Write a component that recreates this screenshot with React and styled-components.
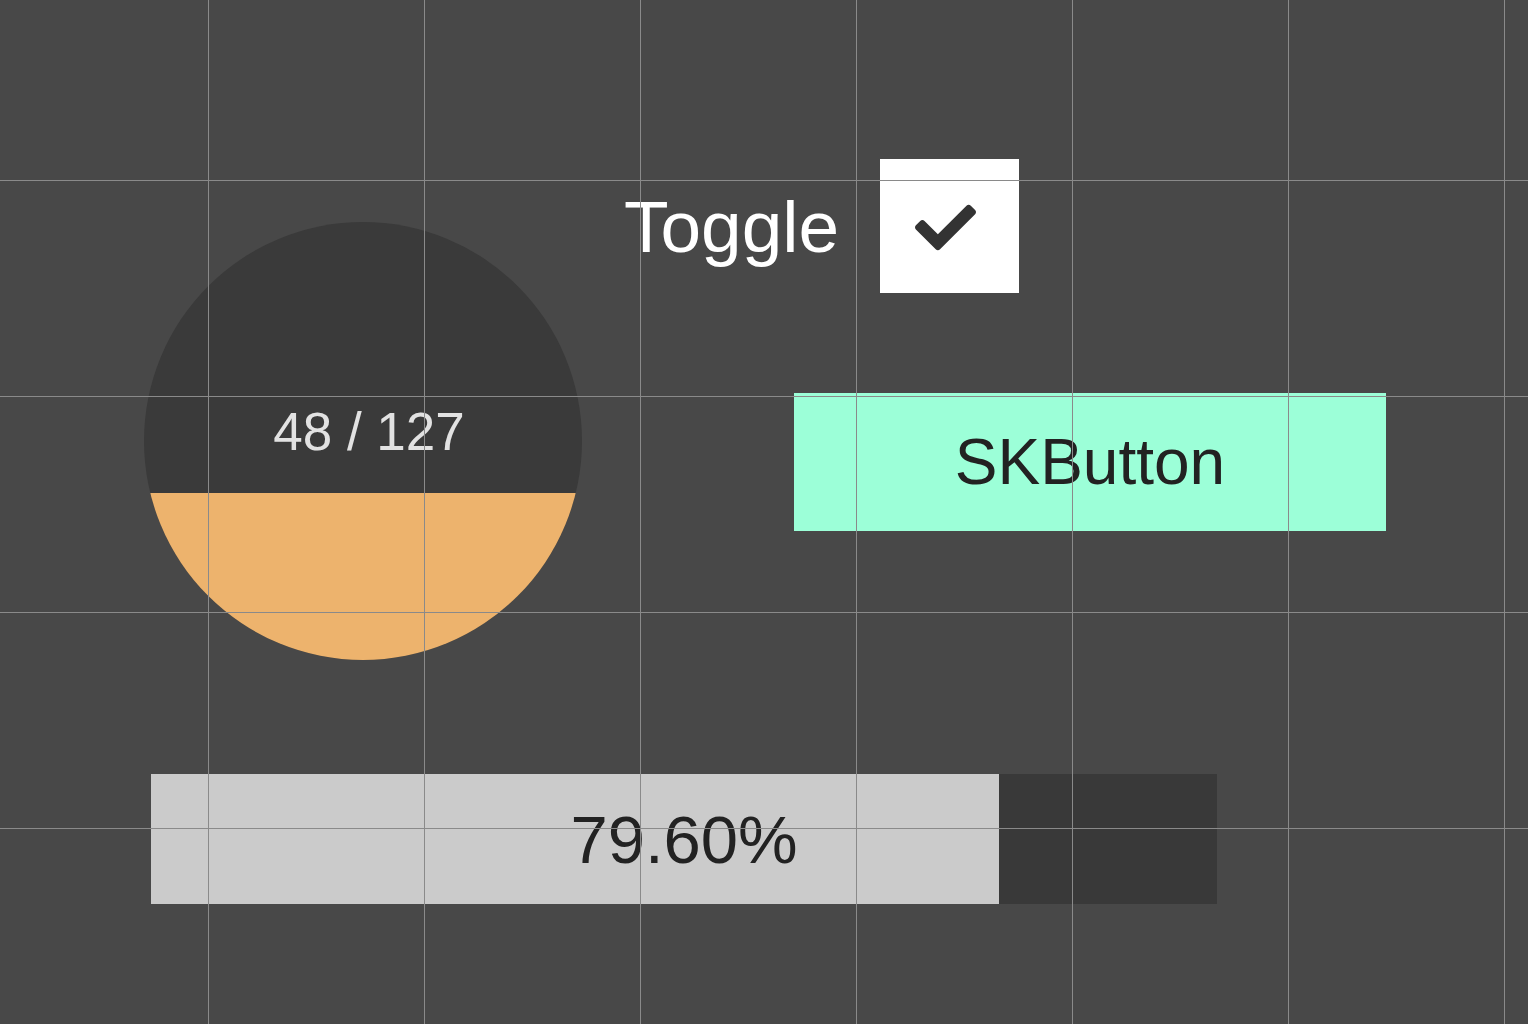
import React from "react";
import styled, { createGlobalStyle } from "styled-components";
import { FaCheck } from "react-icons/fa";

const Global = createGlobalStyle`
  html, body { margin: 0; padding: 0; background: #484848; }
  body { font-family: "Liberation Sans", Arial, sans-serif; }
`;

const Scene = styled.div`
  position: relative;
  width: 1528px;
  height: 1024px;
  overflow: hidden;
  background: #484848;
  box-sizing: border-box;
  padding-top: 159px;
  display: flex;
  flex-direction: column;
`;

const GridOverlay = styled.div`
  position: absolute;
  inset: 0;
  pointer-events: none;
  background-image:
    linear-gradient(to right, #8a8a8a 1px, transparent 1px),
    linear-gradient(to bottom, #8a8a8a 1px, transparent 1px);
  background-size: 216px 216px, 216px 216px;
  background-position: 208px 0, 0 180px;
`;

const TopRow = styled.div`
  display: flex;
  align-items: flex-start;
`;

const Dial = styled.div`
  position: relative;
  width: 438px;
  height: 438px;
  margin-left: 144px;
  margin-top: 63px;
  border-radius: 50%;
  overflow: hidden;
  background: #3a3a3a;
  display: flex;
  align-items: center;
  justify-content: center;
  box-sizing: border-box;
  padding: 0 0 20px 12px;
  flex-shrink: 0;
`;

const DialFill = styled.div`
  position: absolute;
  left: 0;
  right: 0;
  bottom: 0;
  background: #edb36d;
`;

const DialLabel = styled.span`
  position: relative;
  font-size: 53px;
  line-height: 1;
  color: #e2e2e2;
  white-space: nowrap;
`;

const Controls = styled.div`
  display: flex;
  flex-direction: column;
  align-items: flex-start;
  margin-left: 42px;
`;

const ToggleRow = styled.div`
  display: flex;
  align-items: center;
  gap: 41px;
`;

const ToggleLabel = styled.span`
  font-size: 73px;
  line-height: 1;
  color: #ffffff;
`;

const CheckBox = styled.div`
  width: 139px;
  height: 134px;
  background: #ffffff;
  display: flex;
  align-items: center;
  justify-content: center;
  padding-right: 8px;
  padding-top: 2px;
  box-sizing: border-box;
  color: #333333;
`;

const SKButton = styled.div`
  margin-left: 170px;
  margin-top: 100px;
  width: 592px;
  height: 138px;
  background: #9cffd8;
  color: #222222;
  font-size: 64px;
  display: flex;
  align-items: center;
  justify-content: center;
  line-height: 1;
`;

const Progress = styled.div`
  position: relative;
  margin-left: 151px;
  margin-top: 114px;
  width: 1066px;
  height: 130px;
  background: #393939;
  display: flex;
  align-items: center;
  justify-content: center;
`;

const ProgressFill = styled.div`
  position: absolute;
  left: 0;
  top: 0;
  bottom: 0;
  background: #cbcbcb;
`;

const ProgressText = styled.span`
  position: relative;
  font-size: 67px;
  line-height: 1;
  color: #222222;
`;

export default function App() {
  const count = 48;
  const total = 127;
  const progress = 0.796;
  return (
    <>
      <Global />
      <Scene>
        <TopRow>
          <Dial>
            <DialFill style={{ height: `${Math.round((count / total) * 438 + 1.5)}px` }} />
            <DialLabel>
              {count} / {total}
            </DialLabel>
          </Dial>
          <Controls>
            <ToggleRow>
              <ToggleLabel>Toggle</ToggleLabel>
              <CheckBox>
                <FaCheck size={61} />
              </CheckBox>
            </ToggleRow>
            <SKButton>SKButton</SKButton>
          </Controls>
        </TopRow>
        <Progress>
          <ProgressFill style={{ width: `${Math.floor(progress * 1066)}px` }} />
          <ProgressText>{(progress * 100).toFixed(2)}%</ProgressText>
        </Progress>
        <GridOverlay />
      </Scene>
    </>
  );
}
